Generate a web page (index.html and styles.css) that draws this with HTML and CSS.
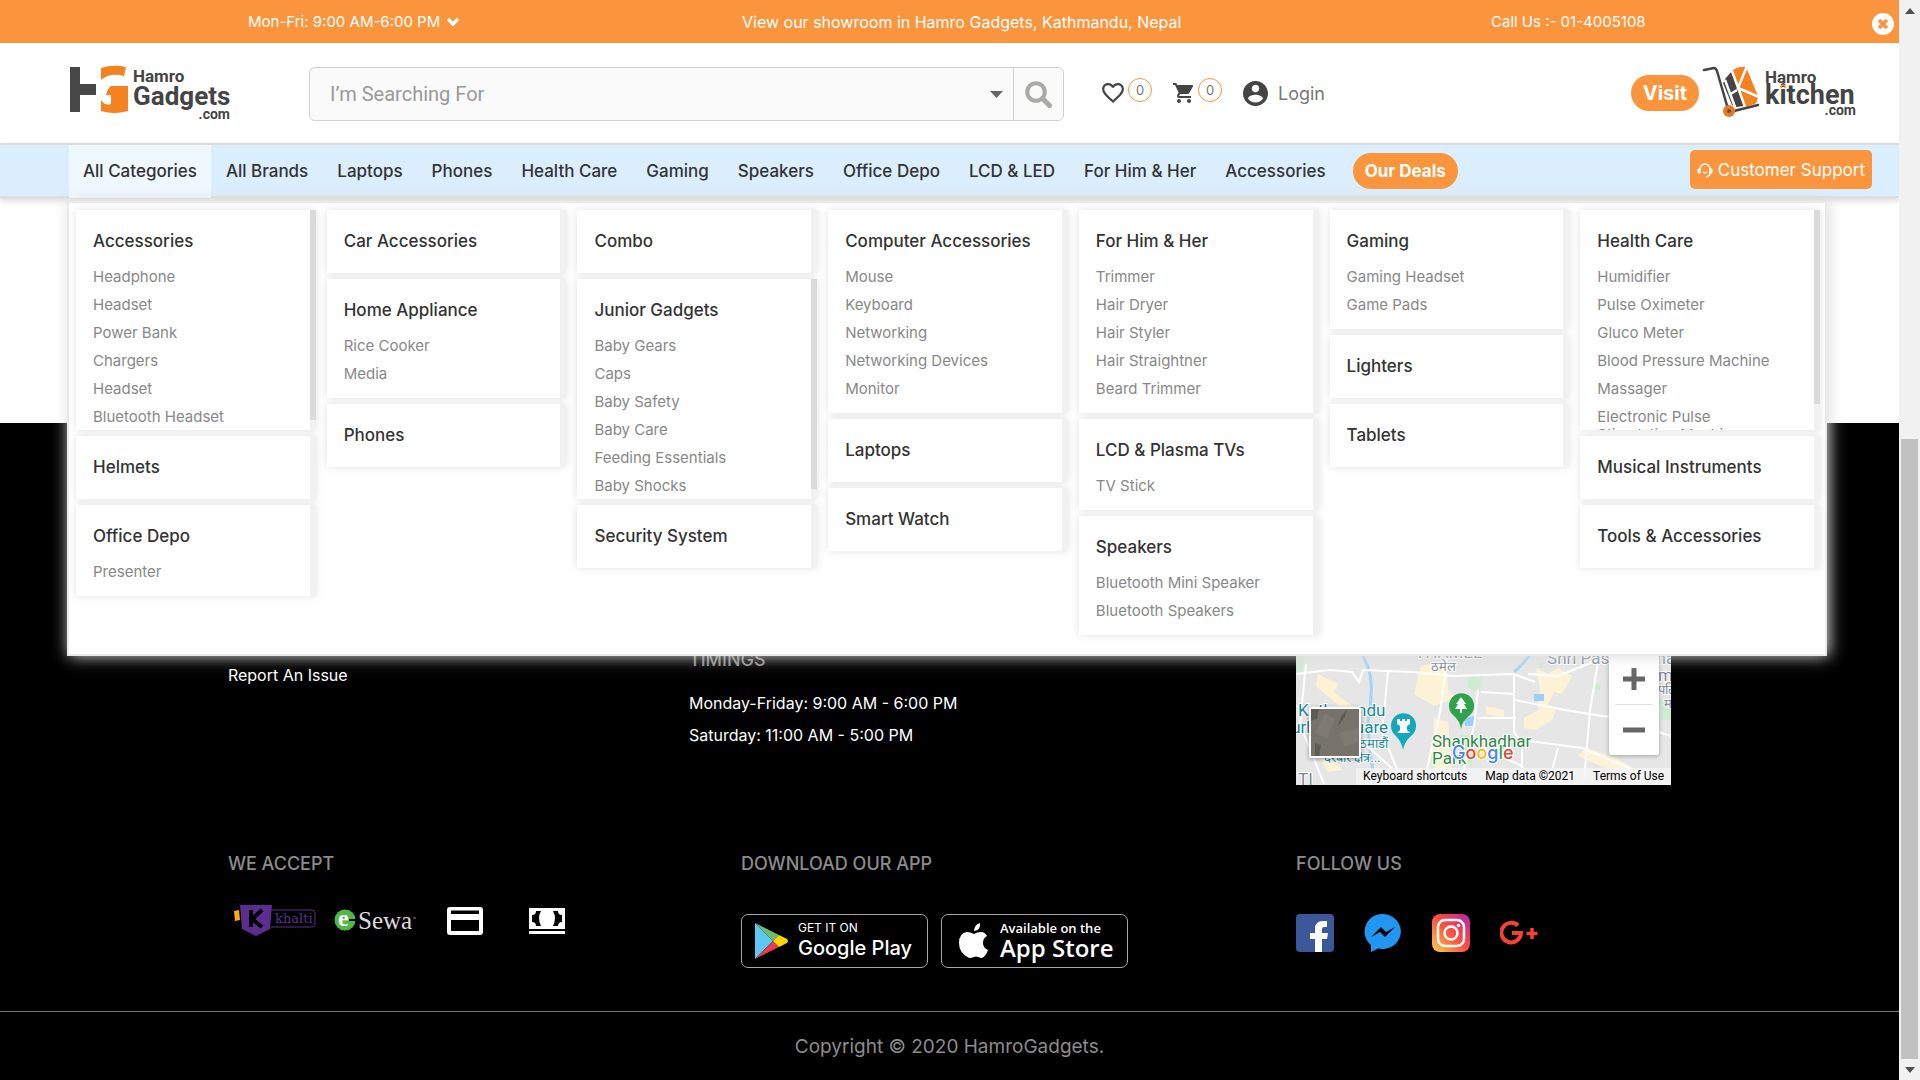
FILE: index.html
```html
<!DOCTYPE html>
<html lang="en">
<head>
<meta charset="utf-8">
<title>Hamro Gadgets</title>
<link rel="stylesheet" href="styles.css">
</head>
<body>
<div class="page">
  <div class="topbar">
    <button class="topbar-hours" type="button">Mon-Fri: 9:00 AM-6:00 PM
      <svg width="14" height="10" viewBox="0 0 14 10"><path d="M2 2l5 5 5-5" fill="none" stroke="#fff" stroke-width="3.4"/></svg>
    </button>
    <a class="topbar-showroom" href="#">View our showroom in Hamro Gadgets, Kathmandu, Nepal</a>
    <a class="topbar-call" href="#">Call Us :- 01-4005108</a>
    <button class="topbar-close" type="button" aria-label="Close">
      <svg width="22" height="22" viewBox="0 0 22 22"><circle cx="11" cy="11" r="11" fill="#fff"/><path d="M7 7l8 8M15 7l-8 8" stroke="#fa953e" stroke-width="3.4"/></svg>
    </button>
  </div>

  <header class="header">
    <a class="logo" href="#" aria-label="Hamro Gadgets">
      <svg width="162" height="56" viewBox="0 0 162 56">
        <path d="M1 2h10v17h16v11H11v17H1z" fill="#474747"/>
        <path d="M32 3q12-4 25-1l-2 9q-14-4-23 4z" fill="#f58220"/>
        <path d="M42 21h17v25q-14 4-27 0V35q4 6 10 4V30h-5q1-6 5-9z" fill="#f58220"/>
        <text x="64" y="17" class="logo-small">Hamro</text>
        <text x="64" y="40" class="logo-big">Gadgets</text>
        <text x="161" y="54" text-anchor="end" class="logo-com">.com</text>
      </svg>
    </a>
    <form class="search">
      <input class="search-input" type="text" placeholder="I’m Searching For" aria-label="Search">
      <button class="search-toggle" type="button" aria-label="Choose category"><svg width="13" height="7" viewBox="0 0 13 7"><path d="M0 0h13L6.500 7z" fill="#666"/></svg></button>
      <button class="search-go" type="submit" aria-label="Search">
        <svg width="27" height="27" viewBox="0 0 27 27" fill="none" stroke="#a9aaa6"><circle cx="11" cy="11" r="8.800" stroke-width="4"/><path d="M17.500 17.500l7 7" stroke-width="5" stroke-linecap="round"/></svg>
      </button>
    </form>
    <div class="account">
      <a class="account-link" href="#" aria-label="Wishlist">
        <svg width="22" height="20" viewBox="2 3 20 18.400"><path fill="#444" d="M16.500 3c-1.740 0-3.410.81-4.500 2.090C10.910 3.810 9.240 3 7.500 3 4.420 3 2 5.420 2 8.500c0 3.780 3.400 6.860 8.550 11.540L12 21.350l1.450-1.320C18.600 15.360 22 12.280 22 8.500 22 5.420 19.580 3 16.500 3zm-4.400 15.550l-.1.100-.1-.1C7.140 14.240 4 11.390 4 8.500 4 6.500 5.500 5 7.500 5c1.540 0 3.040.99 3.570 2.360h1.870C13.460 5.990 14.960 5 16.500 5c2 0 3.500 1.500 3.500 3.500 0 2.890-3.140 5.740-7.900 10.050z"/></svg>
        <span class="badge">0</span>
      </a>
      <a class="account-link" href="#" aria-label="Cart">
        <svg width="21" height="22" viewBox="1 2 21 20"><path fill="#444" d="M7 18c-1.100 0-1.990.9-1.990 2S5.900 22 7 22s2-.9 2-2-.9-2-2-2zM1 2v2h2l3.600 7.590-1.350 2.450c-.16.280-.25.610-.25.960 0 1.100.9 2 2 2h12v-2H7.420c-.14 0-.25-.11-.25-.25l.03-.12.900-1.630h7.450c.75 0 1.410-.41 1.750-1.030l3.580-6.490A1 1 0 0 0 20 4H5.210l-.94-2H1zm16 16c-1.100 0-1.990.9-1.990 2s.89 2 1.990 2 2-.9 2-2-.9-2-2-2z"/></svg>
        <span class="badge">0</span>
      </a>
      <a class="login" href="#">
        <svg width="25" height="25" viewBox="2 2 20 20"><path fill="#444" d="M12 2C6.480 2 2 6.480 2 12s4.480 10 10 10 10-4.480 10-10S17.520 2 12 2zm0 3c1.660 0 3 1.340 3 3s-1.340 3-3 3-3-1.340-3-3 1.340-3 3-3zm0 14.200c-2.500 0-4.710-1.280-6-3.220.03-1.990 4-3.080 6-3.080 1.990 0 5.970 1.090 6 3.080-1.290 1.940-3.500 3.220-6 3.220z"/></svg>
        <span>Login</span>
      </a>
    </div>
    <div class="visit">
      <a class="visit-pill" href="#">Visit</a>
      <a class="logo" href="#" aria-label="Hamro Kitchen">
        <svg width="156" height="54" viewBox="0 0 156 54">
          <path d="M2 4l10-2q2 0 3 3l11 38" fill="none" stroke="#444" stroke-width="2.500" stroke-linecap="round"/>
          <path d="M23 13l7-8 12 35-8 1z" fill="#444"/>
          <path d="M21 17l2-3 9 26-2-1z" fill="#444"/>
          <path d="M30 5q6-5 14-4l12 29q0 5-3 8l-10 3z" fill="#f58220"/>
          <path d="M30 5l13 36M45 0l-9 22 21 9M23 14l10 27M27 29l8-5" fill="none" stroke="#fff" stroke-width="2.500"/>
          <path d="M32 45l24-6" stroke="#444" stroke-width="2.500" stroke-linecap="round"/>
          <circle cx="27" cy="45" r="6" fill="#e87a1c"/><circle cx="27" cy="45" r="2" fill="#555"/>
          <text x="63" y="17" class="logo-small">Hamro</text>
          <text x="63" y="38" class="logo-big logo-wide">kitchen</text>
          <path d="M79 22q0-3 2-3t2 3" fill="none" stroke="#f58220" stroke-width="1.500"/>
          <text x="154" y="49" text-anchor="end" class="logo-com">.com</text>
        </svg>
      </a>
    </div>
  </header>

  <nav class="nav">
    <div class="nav-links">
      <a class="nav-link nav-link-active" href="#">All Categories</a>
      <a class="nav-link" href="#">All Brands</a>
      <a class="nav-link" href="#">Laptops</a>
      <a class="nav-link" href="#">Phones</a>
      <a class="nav-link" href="#">Health Care</a>
      <a class="nav-link" href="#">Gaming</a>
      <a class="nav-link" href="#">Speakers</a>
      <a class="nav-link" href="#">Office Depo</a>
      <a class="nav-link" href="#">LCD &amp; LED</a>
      <a class="nav-link" href="#">For Him &amp; Her</a>
      <a class="nav-link" href="#">Accessories</a>
      <a class="deals" href="#">Our Deals</a>
    </div>
    <button class="support" type="button">
      <svg width="16" height="16" viewBox="0 0 16 16" fill="none" stroke="#fff" stroke-width="1.500"><path d="M3 11V7a5 5 0 0 1 10 0v4q0 3-4 4"/><path d="M3 7q-2 0-2 2t2 2M13 7q2 0 2 2t-2 2M6 10q2 1.500 4 0"/></svg>
      Customer Support
    </button>

    <div class="mega">
      <div class="mega-col">
        <section class="card card-scroll">
          <h3 class="card-title">Accessories</h3>
          <a href="#">Headphone</a><a href="#">Headset</a><a href="#">Power Bank</a><a href="#">Chargers</a><a href="#">Headset</a><a href="#">Bluetooth Headset</a>
        </section>
        <section class="card"><h3 class="card-title">Helmets</h3></section>
        <section class="card"><h3 class="card-title">Office Depo</h3><a href="#">Presenter</a></section>
      </div>
      <div class="mega-col">
        <section class="card"><h3 class="card-title">Car Accessories</h3></section>
        <section class="card"><h3 class="card-title">Home Appliance</h3><a href="#">Rice Cooker</a><a href="#">Media</a></section>
        <section class="card"><h3 class="card-title">Phones</h3></section>
      </div>
      <div class="mega-col">
        <section class="card"><h3 class="card-title">Combo</h3></section>
        <section class="card card-scroll">
          <h3 class="card-title">Junior Gadgets</h3>
          <a href="#">Baby Gears</a><a href="#">Caps</a><a href="#">Baby Safety</a><a href="#">Baby Care</a><a href="#">Feeding Essentials</a><a href="#">Baby Shocks</a>
        </section>
        <section class="card"><h3 class="card-title">Security System</h3></section>
      </div>
      <div class="mega-col">
        <section class="card">
          <h3 class="card-title">Computer Accessories</h3>
          <a href="#">Mouse</a><a href="#">Keyboard</a><a href="#">Networking</a><a href="#">Networking Devices</a><a href="#">Monitor</a>
        </section>
        <section class="card"><h3 class="card-title">Laptops</h3></section>
        <section class="card"><h3 class="card-title">Smart Watch</h3></section>
      </div>
      <div class="mega-col">
        <section class="card">
          <h3 class="card-title">For Him &amp; Her</h3>
          <a href="#">Trimmer</a><a href="#">Hair Dryer</a><a href="#">Hair Styler</a><a href="#">Hair Straightner</a><a href="#">Beard Trimmer</a>
        </section>
        <section class="card"><h3 class="card-title">LCD &amp; Plasma TVs</h3><a href="#">TV Stick</a></section>
        <section class="card"><h3 class="card-title">Speakers</h3><a href="#">Bluetooth Mini Speaker</a><a href="#">Bluetooth Speakers</a></section>
      </div>
      <div class="mega-col">
        <section class="card"><h3 class="card-title">Gaming</h3><a href="#">Gaming Headset</a><a href="#">Game Pads</a></section>
        <section class="card"><h3 class="card-title">Lighters</h3></section>
        <section class="card"><h3 class="card-title">Tablets</h3></section>
      </div>
      <div class="mega-col">
        <section class="card card-scroll card-scroll-long">
          <h3 class="card-title">Health Care</h3>
          <a href="#">Humidifier</a><a href="#">Pulse Oximeter</a><a href="#">Gluco Meter</a><a href="#">Blood Pressure Machine</a><a href="#">Massager</a><a class="card-link-wrap" href="#">Electronic Pulse<br>Stimulation Machine</a>
        </section>
        <section class="card"><h3 class="card-title">Musical Instruments</h3></section>
        <section class="card"><h3 class="card-title">Tools &amp; Accessories</h3></section>
      </div>
    </div>
  </nav>

  <main class="content"></main>

  <footer class="footer">
    <div class="footer-row footer-info">
      <div class="footer-report"><a href="#">Report An Issue</a></div>
      <div class="footer-timings">
        <h4 class="footer-title">TIMINGS</h4>
        <p>Monday-Friday: 9:00 AM - 6:00 PM</p>
        <p>Saturday: 11:00 AM - 5:00 PM</p>
      </div>
      <div class="map">
        <svg class="map-art" viewBox="0 -31 375 160" preserveAspectRatio="xMidYMax slice">
          <rect y="-31" width="375" height="160" fill="#e6e6e6"/>
          <g fill="#fdf3d4">
            <path d="M125 10l25-6 2 30 8 8-22 8-20-12zM22 18l20 10-4 8 28 22-6 6-40-34zM240 12l12 6 10-6 14 8-10 18-8-2-8 16h-8l2-20zM228 62l22-12 10 4-4 10-16 10-12-2zM190 50l18 4v8l-18-4zM138 62l14 4 4 50-20-6zM290 92l30 10 30 18-8 6-60-26zM20 96l16 4 10 14-14 2z"/>
          </g>
          <g fill="#cdecd0"><path d="M172 20l14 2-2 14-13-4zM0-6l8 10-2 12-6 2zM164 78l12 2v30h-12zM297 25l8 4-2 5-8-2zM243 6h5l-1 6h-5zM364 44h11v20h-11z"/></g>
          <g fill="#9dcdf8"><path d="M238 38h10v7h-10zM168 62l10-2 1 10h-10z"/></g>
          <path d="M64-4q10 14 11 30t-2 32 6 70M238-8q-8 14-20 24" fill="none" stroke="#a5d3f8" stroke-width="3"/>
          <g fill="none" stroke="#fff" stroke-width="2">
            <path d="M0 18l34-4 22 2 7 10 4-12 50 2 40 4 60-2 22 8M218 18v58l8 12v41M182 34l-4 36-14 59M182 62h38M185 36l34 2M152-4l-8 60-16 70M92 16l-6 60 20 50M0 50l60 30 40 36M219 44l50 10 50 8 56 18M226 84l60 8 89 38M262 92l-10 37M232 18l30 2 50-20M304-6l-10 60-6 70M10 8l-6 60 24 60M182 90l44 20M322 40l53-6"/>
          </g>
          <g class="map-label map-grey">
            <text x="119" y="2">THAMEL</text><text x="135" y="15" class="map-small">ठमेल</text>
            <text x="251" y="8">Shri Pashupatina</text><text x="362" y="25">m</text><text x="362" y="38" class="map-small">पति</text><text x="368" y="52" class="map-small">म</text>
            <text x="2" y="129">TI</text>
          </g>
          <g class="map-label map-teal">
            <text x="2" y="60">Kathmandu</text><text x="92" y="77" text-anchor="end">Durbar Square</text>
            <text x="92" y="92" text-anchor="end" class="map-small">काठमाडौं</text><text x="28" y="106" class="map-small">दरबार क्षेत्र...</text>
          </g>
          <path d="M107 94q-1-8-8-15a12.500 12.500 0 1 1 17 0q-8 7-9 15z" fill="#12a9bd"/>
          <path d="M101 63h3v2h2v-2h3v2h2v-2h3v5l-3 2v4l3 3h-13l3-3v-4l-3-2z" fill="#fff"/>
          <path d="M165 73q-1-8-8-14a12.500 12.500 0 1 1 17 0q-8 6-9 14z" fill="#2fa24c"/>
          <path d="M165 41l5 7h-2l3 5h-5v4h-2v-4h-5l3-5h-2z" fill="#fff"/>
          <g class="map-label map-green"><text x="136" y="91">Shankhadhar</text><text x="136" y="108">Park</text></g>
          <text x="156" y="103" class="map-brand"><tspan fill="#4285f4">G</tspan><tspan fill="#ea4335">o</tspan><tspan fill="#fbbc05">o</tspan><tspan fill="#4285f4">g</tspan><tspan fill="#34a853">l</tspan><tspan fill="#ea4335">e</tspan></text>
        </svg>
        <button class="map-satellite" type="button" aria-label="Satellite view">
          <svg width="48" height="47" viewBox="0 0 48 47"><rect width="48" height="47" fill="#77736b"/><path d="M0 0h8L6 10 0 12zM30 8l6-8-2 8-8 10zM4 34l6 2-2 11H4z" fill="#5b5d54"/><path d="M14 4l10 6-8 20-12-6zM28 24l20-6v14L34 38z" fill="#7e7971"/></svg>
        </button>
        <div class="map-zoom">
          <button type="button" aria-label="Zoom in"><svg width="22" height="22" viewBox="0 0 22 22"><path d="M0 11h22M11 0v22" stroke="#666" stroke-width="5"/></svg></button>
          <button type="button" aria-label="Zoom out"><svg width="22" height="22" viewBox="0 0 22 22"><path d="M0 11h22" stroke="#666" stroke-width="5"/></svg></button>
        </div>
        <div class="map-bar"><button type="button">Keyboard shortcuts</button><span>Map data ©2021</span><a href="#">Terms of Use</a></div>
      </div>
    </div>

    <div class="footer-row footer-brands">
      <section>
        <h4 class="footer-title">WE ACCEPT</h4>
        <div class="payments">
          <svg width="82" height="32" viewBox="0 0 82 32"><path d="M0 6l5-1 1 10-5 1z" fill="#fba919"/><path d="M37 5h41q3 0 3 3v11q0 3-3 3H37" fill="none" stroke="#5c2d91"/><path d="M6 0h32l-2 24-14 7-14-7z" fill="#5c2d91"/><path d="M17 5v17M28 5L18 14l10 8" fill="none" stroke="#000" stroke-width="4"/><text x="41" y="18" class="pay-khalti">khalti</text></svg>
          <svg width="82" height="32" viewBox="0 0 82 32"><circle cx="11" cy="15" r="10.500" fill="#53b648"/><path d="M15 15h7" stroke="#000" stroke-width="2"/><text x="4" y="21" class="pay-e">e</text><text x="24" y="24" class="pay-sewa">Sewa</text><path d="M79 13h3" stroke="#888"/></svg>
          <svg width="36" height="28" viewBox="0 0 36 28"><rect x="2" y="2" width="32" height="24" rx="1" fill="#000" stroke="#fff" stroke-width="4"/><path d="M3 10h30" stroke="#fff" stroke-width="6"/><path d="M4 5h28" stroke="#000" stroke-width="3"/></svg>
          <svg width="36" height="26" viewBox="0 0 36 26"><path d="M0 0h36v21H0zM0 23h36v3H0z" fill="#fff"/><path d="M7 3h5q-4 7 0 15H7q0-4-4-4V7q4 0 4-4zM29 3h-5q4 7 0 15h5q0-4 4-4V7q-4 0-4-4z" fill="#000"/></svg>
        </div>
      </section>
      <section>
        <h4 class="footer-title">DOWNLOAD OUR APP</h4>
        <div class="stores">
          <a class="store" href="#">
            <svg width="33" height="36" viewBox="0 0 33 36"><path d="M0 0v36l18-18z" fill="#5bc9f4"/><path d="M0 0l24 12-6 6z" fill="#6fbe6b"/><path d="M0 36l24-12-6-6z" fill="#e73b50"/><path d="M24 12l8 4q2 2 0 4l-8 4-6-6z" fill="#fdd504"/></svg>
            <span class="store-text store-google"><small>GET IT ON</small><b>Google Play</b></span>
          </a>
          <a class="store" href="#">
            <svg width="29" height="36" viewBox="0 0 29 36"><path d="M21 0q1 7-6 8 0-6 6-8zM15 11q3-2 7-2t6 4q-4 2-4 7t5 7q-2 6-6 8-2 0-4-1t-4 0-5 1Q0 30 0 20 0 10 8 9q3 0 7 2z" fill="#fff"/></svg>
            <span class="store-text store-apple"><small>Available on the</small><b>App Store</b></span>
          </a>
        </div>
      </section>
      <section>
        <h4 class="footer-title">FOLLOW US</h4>
        <div class="social">
          <a href="#" aria-label="Facebook"><svg width="38" height="38" viewBox="0 0 38 38"><rect width="38" height="38" rx="4" fill="#3b5998"/><path d="M19 38V25h-5v-6h5v-4q0-8 8-8h4v6h-3q-2 0-2 2v4h6l-1 6h-5v13z" fill="#fff"/></svg></a>
          <a href="#" aria-label="Messenger"><svg width="38" height="38" viewBox="0 0 38 38"><path d="M19 0a18.500 17.500 0 1 1-5 34.500L7 38v-7A17.500 17.500 0 0 1 19 0z" fill="#2196f3"/><path d="M7 23l10-10 5 5 9-5-10 10-5-5z" fill="#000"/></svg></a>
          <a href="#" aria-label="Instagram"><svg width="38" height="38" viewBox="0 0 38 38"><defs><linearGradient id="insta" x1="0" y1="1" x2="1" y2="0"><stop offset="0" stop-color="#ffd54a"/><stop offset=".45" stop-color="#fb5a3c"/><stop offset=".7" stop-color="#e93a5f"/><stop offset="1" stop-color="#a62bc0"/></linearGradient></defs><rect width="38" height="38" rx="8" fill="url(#insta)"/><g fill="none" stroke="#fff" stroke-width="2.500"><rect x="6" y="6" width="26" height="26" rx="7"/><circle cx="19" cy="19" r="6.500"/></g><circle cx="26.500" cy="11.500" r="1.700" fill="#fff"/></svg></a>
          <a href="#" aria-label="Google Plus"><svg width="38" height="38" viewBox="0 0 38 38"><path d="M18 11.500A9.800 9.800 0 1 0 21 19h-9" fill="none" stroke="#f44336" stroke-width="4"/><path d="M32 14v11M26.500 19.500h11" stroke="#f44336" stroke-width="3.500"/></svg></a>
        </div>
      </section>
    </div>
    <p class="copyright">Copyright © 2020 HamroGadgets.</p>
  </footer>
</div>

<div class="scrollbar" aria-hidden="true">
  <svg width="21" height="21" viewBox="0 0 21 21"><path d="M6 14l5-6 5 6z" fill="#505050"/></svg>
  <span class="scroll-space"></span>
  <span class="scroll-thumb"></span>
  <svg width="21" height="21" viewBox="0 0 21 21"><path d="M6 8l5 6 5-6z" fill="#505050"/></svg>
</div>
</body>
</html>
```
FILE: styles.css
```css
* { box-sizing: border-box; }
body {
  margin: 0;
  font-family: Inter, "Noto Sans", sans-serif;
  color: #444;
  background: #fff;
}
a { color: inherit; text-decoration: none; }
button { border: 0; padding: 0; background: none; font: inherit; color: inherit; cursor: pointer; }
svg { display: block; flex: none; }
h3, h4, p { margin: 0; }
.page { margin-right: 21px; }

/* Top bar */
.topbar {
  display: grid;
  grid-template-columns: 494fr 749fr 381fr 22px;
  align-items: center;
  height: 43px;
  padding-left: 248px;
  padding-right: 5px;
  background: #fa953e;
  color: #fff;
  font-size: 15px;
  white-space: nowrap;
}
.topbar-hours { display: flex; align-items: center; gap: 6px; }
.topbar-showroom { font-size: 16px; }
.topbar-close { margin-top: 4px; }

/* Header */
.header {
  display: flex;
  align-items: center;
  height: 100px;
  padding: 0 41px 0 69px;
}
.logo-small { font: 700 17px Roboto, sans-serif; fill: #444; }
.logo-big { font: 700 26px Roboto, sans-serif; fill: #444; }
.logo-wide { font-size: 27px; }
.logo-com { font: 700 14px Roboto, sans-serif; fill: #444; }
.search {
  display: flex;
  flex: 0 1 755px;
  height: 54px;
  margin-left: 78px;
  margin-top: 2px;
  border: 1px solid #d0d0d0;
  border-radius: 6px;
  background: #fafafa;
}
.search-input {
  flex: 1;
  min-width: 0;
  padding: 0 20px;
  border: 0;
  background: none;
  font: 20px Roboto, sans-serif;
}
.search-input::placeholder { color: #999; }
.search-toggle { width: 34px; display: grid; place-items: center; }
.search-go { width: 50px; display: grid; place-items: center; border-left: 1px solid #d0d0d0; }
.account { display: flex; align-items: center; gap: 21px; margin-left: 38px; }
.account-link { display: flex; align-items: center; gap: 4px; }
.badge {
  width: 24px;
  height: 24px;
  margin-bottom: 6px;
  border: 1px solid #fa953e;
  border-radius: 50%;
  color: #777;
  font-size: 13px;
  line-height: 22px;
  text-align: center;
}
.login { display: flex; align-items: center; gap: 10px; color: #777; font-size: 18px; }
.visit { display: flex; align-items: center; gap: 3px; margin-left: auto; }
.visit-pill {
  padding: 0 12px;
  border-radius: 18px;
  background: #fa953e;
  color: #fff;
  font-size: 20px;
  font-weight: 700;
  line-height: 36px;
}

/* Navigation */
.nav {
  position: relative;
  display: flex;
  justify-content: space-between;
  height: 55px;
  padding: 0 27px 0 69px;
  border-top: 2px solid #ddd;
  border-bottom: 2px solid #ddd;
  box-shadow: 0 3px 6px rgba(0, 0, 0, .15);
  background: #dbeefe;
}
.nav-links { display: flex; align-items: flex-start; gap: 1px; white-space: nowrap; }
.nav-link {
  padding: 0 14px;
  color: #333;
  font-size: 17px;
  font-weight: 500;
  line-height: 53px;
}
.nav-link-active { background: #eff7ff; }
.deals {
  align-self: center;
  margin-left: 12px;
  padding: 0 12px;
  border-radius: 18px;
  background: #fa953e;
  color: #fff;
  font-size: 17px;
  font-weight: 700;
  line-height: 36px;
}
.support {
  display: flex;
  align-items: center;
  gap: 5px;
  height: 39px;
  margin-top: 5px;
  padding: 0 7px;
  border-radius: 5px;
  background: #fa953e;
  color: #fff;
  font-size: 17px;
  white-space: nowrap;
}

/* Category menu, drawn over the page below */
.mega {
  position: absolute;
  z-index: 2;
  top: 56px;
  left: 67px;
  right: 72px;
  display: grid;
  grid-template-columns: repeat(7, minmax(0, 1fr));
  gap: 11px;
  align-items: start;
  padding: 7px 5px 19px 7px;
  border: 2px solid #eaeaea;
  background: #fff;
  box-shadow: 2px 0 15px #ddd;
}
.mega-col { display: grid; gap: 6px; }
.card {
  padding: 18px 12px 10px 17px;
  background: linear-gradient(#f1f1f1, #f1f1f1) right top / 6px 100% no-repeat #fff;
  box-shadow: 0 0 8px rgba(0, 0, 0, .12);
}
.card-scroll {
  height: 220px;
  overflow: hidden;
  background:
    linear-gradient(#dadada, #dadada) right top / 6px 210px no-repeat,
    linear-gradient(#f1f1f1, #f1f1f1) right top / 6px 100% no-repeat #fff;
}
.card-scroll-long { background-size: 6px 194px, 6px 100%; }
.card-title {
  margin-bottom: 8px;
  color: #333;
  font-size: 17px;
  font-weight: 500;
  line-height: 27px;
  white-space: nowrap;
}
.card a {
  display: block;
  color: #888;
  font-size: 15px;
  line-height: 28px;
  white-space: nowrap;
}
.card .card-link-wrap { padding-top: 5px; line-height: 18px; }

/* Page area between menu and footer */
.content { height: 225px; }

/* Footer */
.footer { padding-top: 202px; background: #000; color: #fff; }
.footer-row { display: grid; align-items: start; padding: 0 12%; }
.footer-info { grid-template-columns: 461fr 607fr 375fr; font-size: 16px; line-height: 32px; }
.footer-brands { grid-template-columns: 513fr 555fr 375fr; padding-top: 67px; padding-bottom: 43px; }
.footer-report { padding-top: 34px; }
.footer-timings { padding-top: 23px; }
.footer-title { color: #8c8c8c; font-size: 18px; font-weight: 500; line-height: 24px; }
.footer-timings .footer-title { margin-bottom: 15px; }
.payments { display: flex; align-items: center; height: 32px; gap: 18px; margin-top: 29px; padding-left: 6px; }
.payments svg:nth-child(3) { margin-left: 13px; }
.payments svg:nth-child(4) { margin-left: 28px; }
.pay-khalti { font: 13px "DejaVu Serif", serif; fill: #5c2d91; }
.pay-e { font: 700 24px "Liberation Serif", serif; fill: #fff; }
.pay-sewa { font: 25px "Liberation Serif", serif; fill: #ddd; }
.stores { display: flex; gap: 13px; margin-top: 38px; }
.store {
  display: flex;
  align-items: center;
  gap: 10px;
  width: 187px;
  height: 54px;
  padding-left: 13px;
  border: 1px solid #a6a6a6;
  border-radius: 7px;
  white-space: nowrap;
}
.store + .store { padding-left: 17px; gap: 12px; }
.store-text { display: grid; }
.store-text small { font-size: 12px; line-height: 14px; }
.store-text b { font-size: 20px; font-weight: 500; line-height: 26px; }
.store-apple { font-family: "Open Sans", sans-serif; }
.store-apple small { font-size: 13px; font-weight: 600; }
.store-apple b { font-size: 24px; font-weight: 600; }
.social { display: flex; gap: 30px; margin-top: 38px; }
.copyright {
  border-top: 1px solid #777;
  color: #8c8c8c;
  font-size: 19px;
  line-height: 69px;
  text-align: center;
}

/* Map */
.map { position: relative; height: 160px; overflow: hidden; background: #e6e6e6; color: #222; }
.map-art { width: 100%; height: 100%; }
.map-label { font: 17px Roboto, sans-serif; stroke: #fff; stroke-width: 2px; paint-order: stroke; }
.map-small { font-size: 13px; }
.map-grey { fill: #7b8794; }
.map-teal { fill: #16899a; }
.map-green { fill: #2b8a45; }
.map-brand { font: 500 18px Inter, sans-serif; stroke: #fff; stroke-width: 2px; paint-order: stroke; }
.map-satellite {
  position: absolute;
  left: 13px;
  bottom: 27px;
  border: 2px solid #fff;
  border-radius: 2px;
  box-shadow: 0 1px 4px rgba(0, 0, 0, .4);
}
.map-zoom {
  position: absolute;
  right: 12px;
  bottom: 30px;
  width: 50px;
  padding: 0 6px;
  border-radius: 2px;
  background: #fff;
  box-shadow: 0 1px 4px rgba(0, 0, 0, .3);
}
.map-zoom button { display: grid; place-items: center; width: 100%; height: 51px; }
.map-zoom button + button { border-top: 1px solid #e0e0e0; }
.map-bar {
  position: absolute;
  right: 0;
  bottom: 0;
  display: flex;
  gap: 18px;
  padding: 0 7px;
  background: rgba(245, 245, 245, .8);
  color: #000;
  font: 12px/17px Roboto, sans-serif;
}

/* Window scroll bar */
.scrollbar {
  position: fixed;
  top: 0;
  right: 0;
  bottom: 0;
  display: flex;
  flex-direction: column;
  width: 21px;
  background: #f1f1f1;
}
.scroll-space { flex: 418; }
.scroll-thumb { flex: 619; margin: 0 2px; background: #c1c1c1; }
```
